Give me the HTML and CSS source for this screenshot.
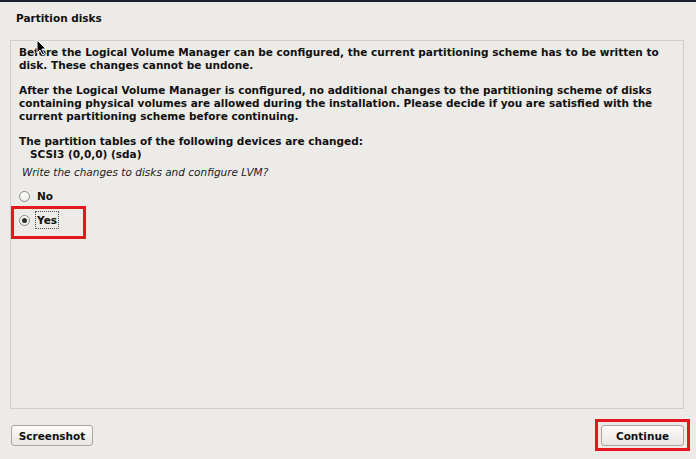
FILE: index.html
```html
<!DOCTYPE html>
<html>
<head>
<meta charset="utf-8">
<title>Partition disks</title>
<link rel="stylesheet" href="styles.css">
</head>
<body>
<div class="window">
  <div class="title">Partition disks</div>
  <div class="panel">
    <p class="para">Before the Logical Volume Manager can be configured, the current partitioning scheme has to be written to<br>disk. These changes cannot be undone.</p>
    <p class="para">After the Logical Volume Manager is configured, no additional changes to the partitioning scheme of disks<br>containing physical volumes are allowed during the installation. Please decide if you are satisfied with the<br>current partitioning scheme before continuing.</p>
    <p class="para tight">The partition tables of the following devices are changed:<br><span class="dev">SCSI3 (0,0,0) (sda)</span></p>
    <p class="question">Write the changes to disks and configure LVM?</p>
    <div class="options">
      <div class="opt"><span class="radio"></span><span class="lbl">No</span></div>
      <div class="opt opt-yes"><span class="radio checked"></span><span class="lbl focus">Yes</span></div>
    </div>
  </div>
  <div class="footer">
    <button class="btn">Screenshot</button>
    <button class="btn btn-continue">Continue</button>
  </div>
  <svg class="cursor" width="12" height="18" viewBox="0 0 12 18"><path d="M1 1 L1 14 L4 11 L6.5 16 L8.5 15 L6 10 L10 10 Z" fill="#000" stroke="#fff" stroke-width="1"/></svg>
</div>
</body>
</html>
```
FILE: styles.css
```css
*, *::before, *::after { box-sizing: border-box; }
html, body { margin: 0; padding: 0; }
body {
  width: 696px;
  height: 459px;
  background: #edebe7;
  font-family: "DejaVu Sans", "Liberation Sans", sans-serif;
  font-size: 10.5px;
  color: #101010;
  overflow: hidden;
}
.window {
  position: relative;
  height: 459px;
  border-top: 2px solid #1c1e30;
  display: flex;
  flex-direction: column;
}
.title {
  height: 38px;
  padding: 10px 0 0 16px;
  font-weight: bold;
  line-height: 13px;
}
.panel {
  margin: 0 12px 0 10px;
  height: 369px;
  border: 1px solid #d2cec9;
  padding: 5px 8px;
  font-weight: bold;
  line-height: 13px;
}
.para { margin: 0 0 12px 0; }
.para.tight { margin-bottom: 0; }
.dev { padding-left: 11px; }
.question {
  margin: 5px 0 0 3px;
  font-weight: normal;
  font-style: italic;
  color: #222;
}
.options { margin-top: 9px; display: flex; flex-direction: column; gap: 8px; }
.opt {
  display: flex;
  align-items: center;
  height: 16px;
  position: relative;
}
.radio {
  width: 11px;
  height: 11px;
  border-radius: 50%;
  border: 1px solid #8d8a85;
  background: linear-gradient(#ffffff, #ecebe9);
  margin-right: 5px;
  display: flex;
  align-items: center;
  justify-content: center;
}
.radio.checked::before {
  content: "";
  width: 5px;
  height: 5px;
  border-radius: 50%;
  background: #2b2b2b;
}
.lbl { padding: 1px 1px; line-height: 14px; border: 1px solid transparent; }
.lbl.focus { border: 1px dotted #4a4a4a; }
.opt-yes::after {
  content: "";
  position: absolute;
  left: -8px;
  top: -6px;
  width: 75px;
  height: 33px;
  border: 3px solid #e5161f;
}
.footer {
  display: flex;
  justify-content: space-between;
  padding: 16px 12px 0 11px;
}
.btn {
  position: relative;
  height: 21px;
  width: 82px;
  border: 1px solid #a9a6a0;
  border-radius: 3px;
  background: linear-gradient(#fdfcfb, #e9e6e2);
  font-family: "DejaVu Sans", "Liberation Sans", sans-serif;
  font-size: 10.5px;
  font-weight: bold;
  color: #101010;
  padding: 0;
}
.btn-continue { width: 83px; }
.btn-continue::after {
  content: "";
  position: absolute;
  left: -7px;
  top: -7px;
  right: -7px;
  bottom: -6px;
  border: 3px solid #e5161f;
}
.cursor {
  position: absolute;
  left: 36px;
  top: 37px;
}
```
